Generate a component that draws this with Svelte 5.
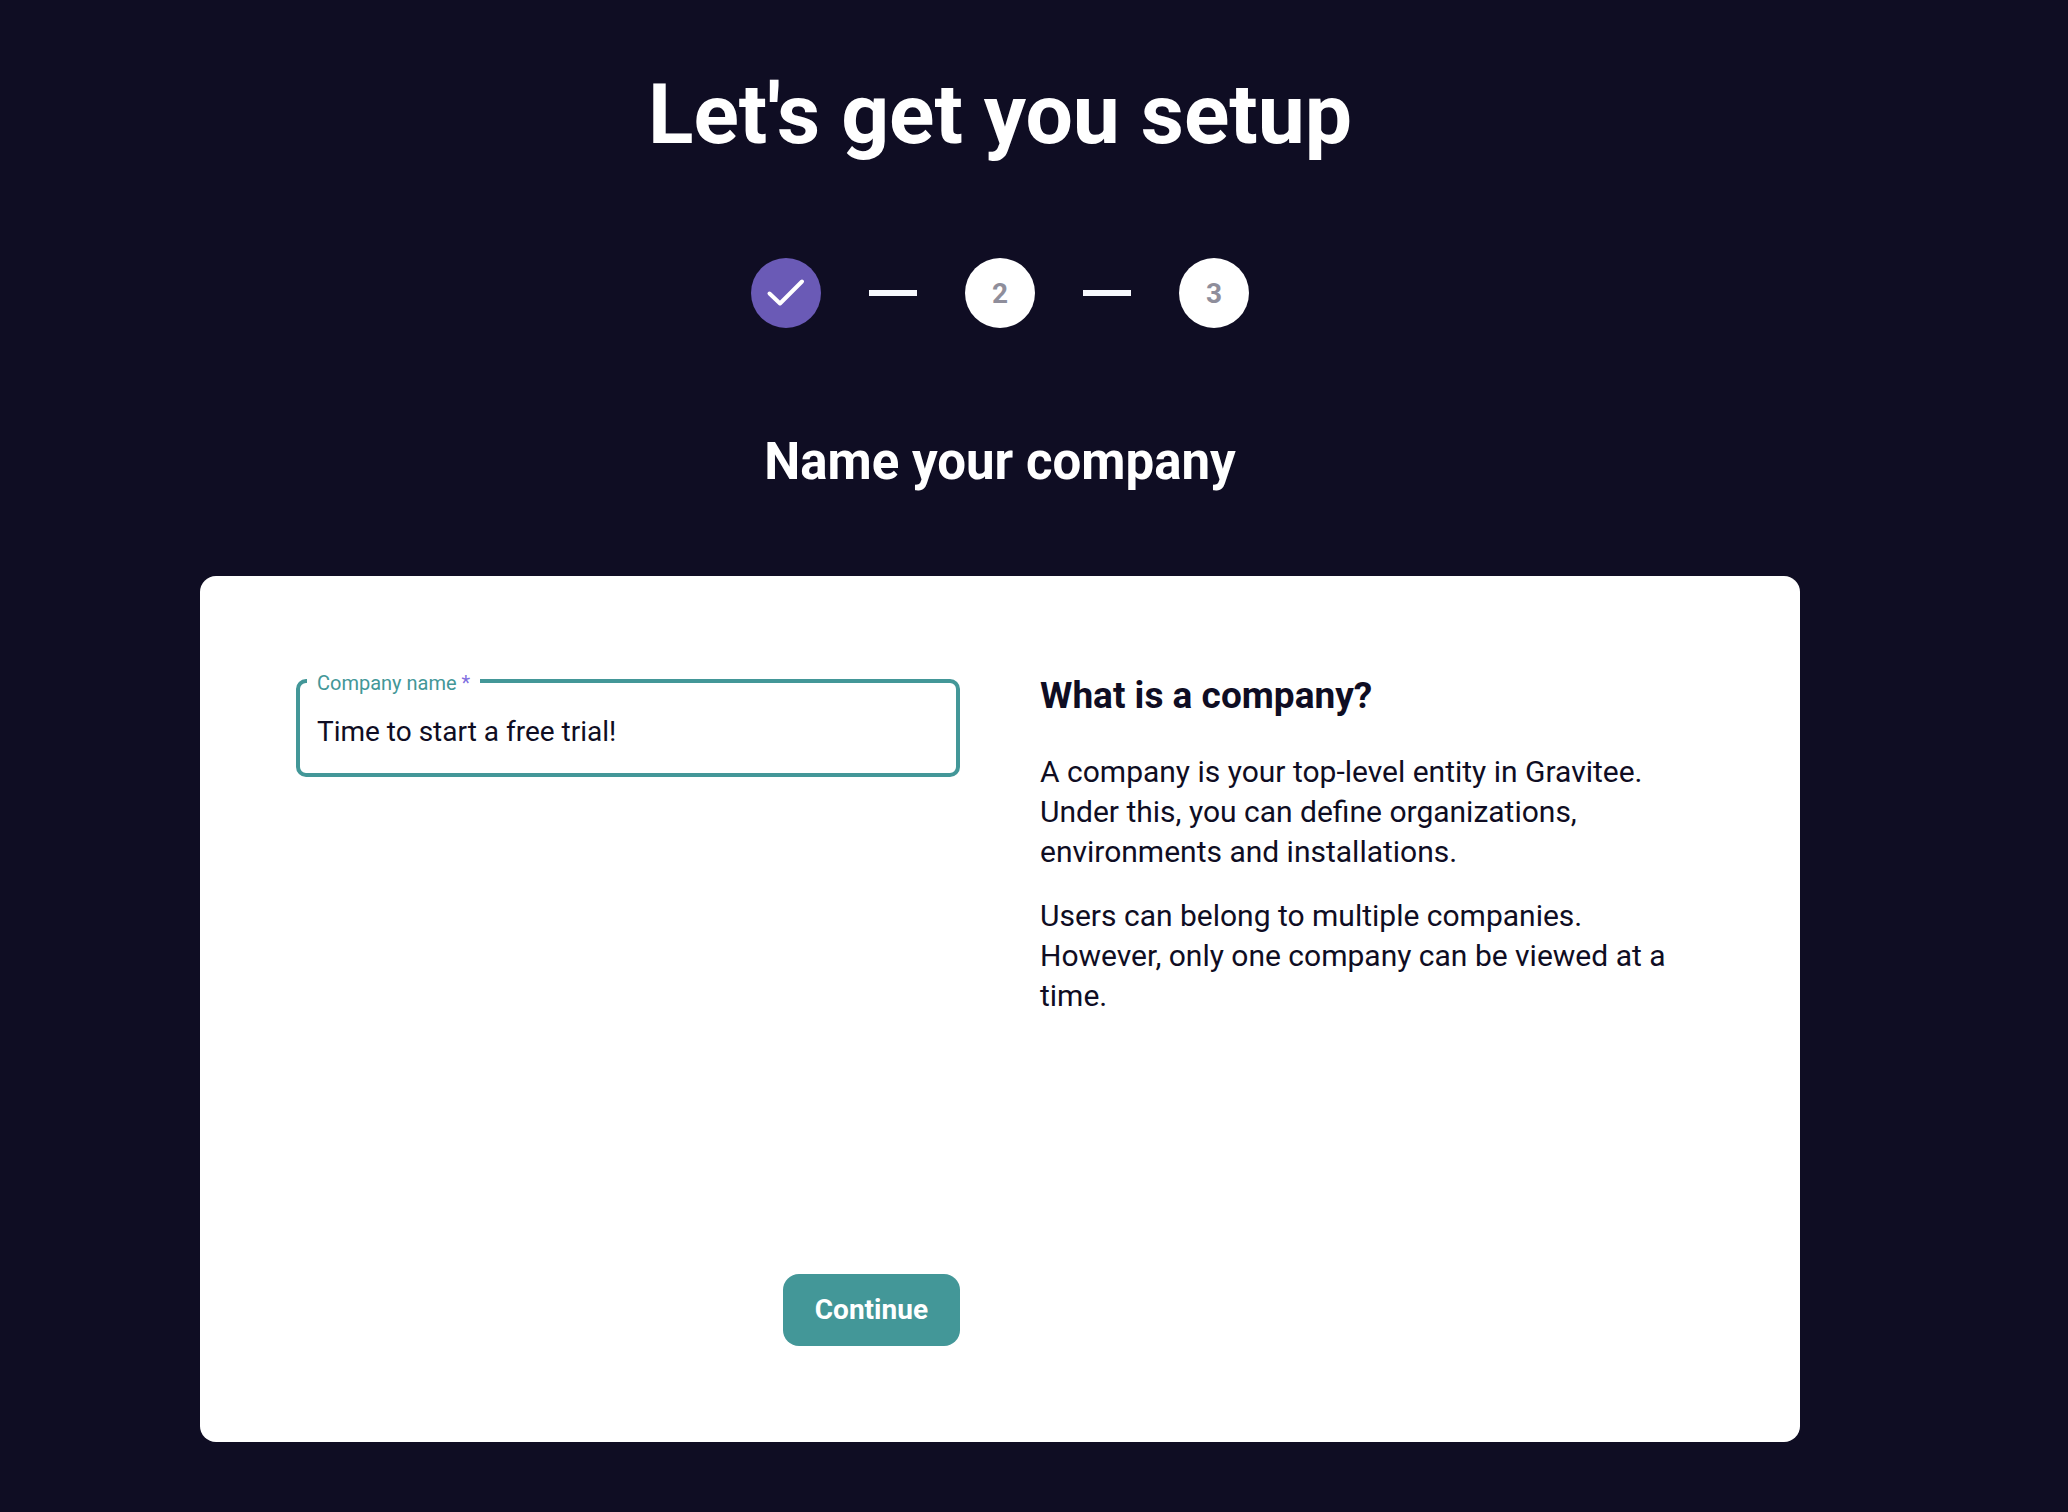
<script>
  let company = $state('Time to start a free trial!');
  const steps = [
    { number: 1, done: true },
    { number: 2, done: false },
    { number: 3, done: false }
  ];
</script>

<main>
  <h1>Let's get you setup</h1>

  <ol class="steps" aria-label="Setup progress">
    {#each steps as step}
      <li>
        <span class="dot" class:done={step.done}>
          {#if step.done}
            <svg viewBox="0 0 70 70" role="img" aria-label="Step 1 complete">
              <path d="M18.5 35.5 L29 45.5 L51 23.5" />
            </svg>
          {:else}
            {step.number}
          {/if}
        </span>
      </li>
    {/each}
  </ol>

  <h2>Name your company</h2>

  <section class="card">
    <form onsubmit={(e) => e.preventDefault()}>
      <fieldset>
        <legend><label for="company">Company name <span class="required">*</span></label></legend>
        <input id="company" type="text" bind:value={company} required />
      </fieldset>
      <button type="submit">Continue</button>
    </form>

    <div class="info">
      <h3>What is a company?</h3>
      <p>
        A company is your top-level entity in Gravitee. Under this, you can define organizations,
        environments and installations.
      </p>
      <p>
        Users can belong to multiple companies. However, only one company can be viewed at a time.
      </p>
    </div>
  </section>
</main>

<style>
  :global(body) {
    margin: 0;
    background: #0f0d23;
  }

  main {
    box-sizing: border-box;
    min-height: 100vh;
    padding: 66px 268px 70px 200px;
    display: flex;
    flex-direction: column;
    align-items: center;
    background: #0f0d23;
    color: #fff;
    font-family: Roboto, 'Liberation Sans', sans-serif;
  }

  h1,
  h2,
  h3,
  p {
    margin: 0;
  }

  h1 {
    font-size: 84px;
    line-height: 98px;
    font-weight: 700;
  }

  .steps {
    display: flex;
    gap: 144px;
    margin: 94px 0 98px;
    padding: 0;
    list-style: none;
  }

  .steps li {
    position: relative;
  }

  .steps li + li::before {
    content: '';
    position: absolute;
    left: -96px;
    top: 32px;
    width: 48px;
    height: 6px;
    background: #f7f8fd;
  }

  .dot {
    display: flex;
    align-items: center;
    justify-content: center;
    width: 70px;
    height: 70px;
    border-radius: 50%;
    background: #fff;
    color: #8f8e9b;
    font-size: 28px;
    font-weight: 700;
  }

  .dot.done {
    background: #6a5ab6;
  }

  .dot svg {
    width: 70px;
    height: 70px;
    fill: none;
    stroke: #fff;
    stroke-width: 4;
    stroke-linecap: round;
    stroke-linejoin: round;
  }

  h2 {
    font-size: 51px;
    line-height: 72px;
    font-weight: 700;
  }

  .card {
    box-sizing: border-box;
    width: 100%;
    min-height: 866px;
    margin-top: 78px;
    padding: 96px;
    display: grid;
    grid-template-columns: 1fr 1fr;
    gap: 80px;
    border-radius: 16px;
    background: #fff;
    color: #0f0d23;
  }

  form {
    display: flex;
    flex-direction: column;
    justify-content: space-between;
    min-width: 0;
  }

  fieldset {
    min-width: 0;
    margin: 0;
    padding: 0 18px 0 7px;
    border: 4px solid #439798;
    border-radius: 10px;
  }

  legend {
    padding: 4px 10px 0;
    color: #439798;
    font-size: 20px;
    line-height: 14px;
  }

  .required {
    color: #7f6ee0;
  }

  input {
    box-sizing: border-box;
    width: 100%;
    height: 83px;
    padding: 0 10px;
    border: 0;
    outline: 0;
    background: transparent;
    color: #0f0d23;
    font: 400 28px/40px Roboto, 'Liberation Sans', sans-serif;
    display: block;
  }

  button {
    align-self: flex-end;
    padding: 16px 32px;
    border: 0;
    border-radius: 16px;
    background: #439798;
    color: #fff;
    font: 700 28px/40px Roboto, 'Liberation Sans', sans-serif;
    cursor: pointer;
  }

  .info {
    display: flex;
    flex-direction: column;
    gap: 24px;
    padding-right: 32px;
  }

  h3 {
    font-size: 37px;
    line-height: 48px;
    font-weight: 700;
    margin-bottom: 8px;
  }

  p {
    font-size: 30px;
    line-height: 40px;
  }
</style>
